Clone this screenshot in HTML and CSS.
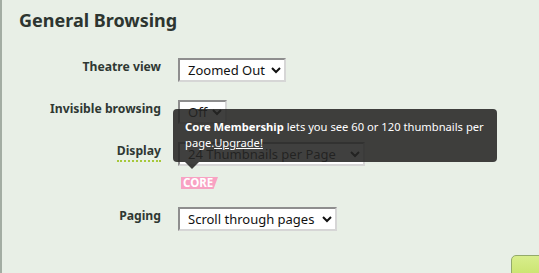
FILE: index.html
```html
<!DOCTYPE html>
<html>
<head>
<meta charset="utf-8">
<link rel="stylesheet" href="styles.css">
</head>
<body>
<div class="panel">
  <h2 class="title">General Browsing</h2>
  <div class="form">
    <div class="label">Theatre view</div>
    <div class="field"><select class="sel sel-theatre"><option>Zoomed Out</option></select></div>

    <div class="label">Invisible browsing</div>
    <div class="field"><select class="sel sel-off"><option>Off</option></select></div>

    <div class="label"><span class="hint">Display</span></div>
    <div class="field">
      <select class="sel sel-display"><option>24 Thumbnails per Page</option></select>
      <div class="badge">CORE</div>
    </div>

    <div class="label">Paging</div>
    <div class="field"><select class="sel sel-paging"><option>Scroll through pages</option></select></div>
  </div>
  <div class="footer"><button class="save"></button></div>

  <div class="tooltip">
    <b>Core Membership</b> lets you see 60 or 120 thumbnails per page.<a class="upgrade">Upgrade!</a>
    <span class="arrow"></span>
  </div>
</div>
</body>
</html>
```

FILE: styles.css
```css
html, body {
  margin: 0;
  padding: 0;
  background: #e8efe6;
  height: 100%;
  overflow: hidden;
}
body {
  font-family: "Noto Sans", "Open Sans", sans-serif;
  color: #2f3833;
}
.panel {
  position: relative;
  border-left: 2px solid #a3ada3;
  height: 100%;
  box-sizing: border-box;
  overflow: hidden;
}
.title {
  margin: 0;
  padding: 8px 0 0 17px;
  font-size: 18px;
  line-height: 24px;
  font-weight: 700;
  color: #2d3530;
}
.form {
  display: grid;
  grid-template-columns: 159px auto;
  column-gap: 17px;
  row-gap: 18px;
  margin-top: 26px;
}
.label {
  text-align: right;
  font-size: 12.2px;
  font-weight: 700;
  line-height: 18px;
  color: #2f3833;
}
.hint {
  border-bottom: 2px dotted #a6c83a;
  padding-bottom: 1px;
}
.field {
  display: flex;
  flex-direction: column;
  align-items: flex-start;
}
.sel {
  font-family: "Noto Sans", "Open Sans", sans-serif;
  font-size: 13px;
  height: 24px;
  box-sizing: border-box;
  border: 2px solid;
  border-color: #8e8e8e #d6d6d6 #d6d6d6 #8e8e8e;
  border-radius: 0;
  background-color: #fff;
  color: #111;
  padding: 0 0 0 4px;
  margin: 0;
}
.sel-theatre { width: 108px; }
.sel-off { width: 49px; }
.sel-display { width: 187px; }
.sel-paging { width: 159px; }
.badge {
  margin: 11px 0 0 3px;
  height: 12px;
  width: 37px;
  background: #f8a2c3;
  color: #fff;
  font-size: 11.5px;
  font-weight: 700;
  line-height: 12px;
  padding-left: 2px;
  box-sizing: border-box;
  clip-path: polygon(0 0, 100% 0, 88% 100%, 0 100%);
}
.footer {
  display: flex;
  justify-content: flex-end;
  margin-top: 24px;
}
.save {
  width: 60px;
  height: 30px;
  margin-right: -32px;
  border: 1px solid #93aa6b;
  border-radius: 5px;
  background: linear-gradient(#d8ee8c, #c4e063);
  padding: 0;
}
.tooltip {
  position: absolute;
  left: 171px;
  top: 109px;
  width: 300px;
  padding: 10px 12px 11px 12px;
  background: rgba(38, 38, 36, 0.88);
  color: #fff;
  font-size: 11.2px;
  line-height: 16px;
  border-radius: 4px;
}
.tooltip b { font-weight: 700; }
.upgrade {
  color: #fff;
  text-decoration: underline;
}
.arrow {
  position: absolute;
  left: 12px;
  bottom: -7px;
  width: 0;
  height: 0;
  border-left: 7px solid transparent;
  border-right: 7px solid transparent;
  border-top: 7px solid rgba(38, 38, 36, 0.88);
}
```
